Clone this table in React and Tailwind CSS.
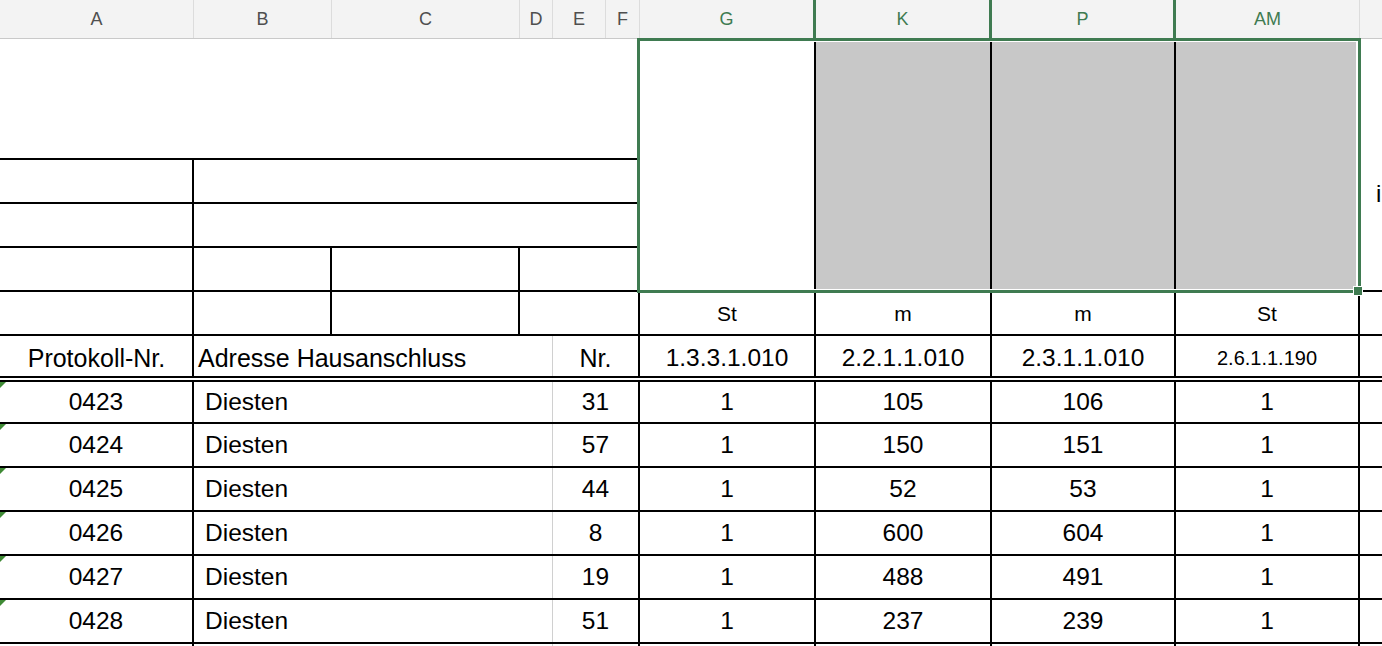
import React from "react";

const rows = [
  ["0423", "Diesten", "31", "1", "105", "106", "1"],
  ["0424", "Diesten", "57", "1", "150", "151", "1"],
  ["0425", "Diesten", "44", "1", "52", "53", "1"],
  ["0426", "Diesten", "8", "1", "600", "604", "1"],
  ["0427", "Diesten", "19", "1", "488", "491", "1"],
  ["0428", "Diesten", "51", "1", "237", "239", "1"],
  ["", "", "", "", "", "", ""],
];

function Header() {
  return (
    <div className="flex h-[39px] border-b border-[#c9c9c9] bg-[#f3f3f3] text-[18px] text-[#4f4f4f]">
      <div className="flex w-[194px] shrink-0 items-center justify-center border-r border-[#dcdcdc]">A</div>
      <div className="flex w-[138px] shrink-0 items-center justify-center border-r border-[#dcdcdc]">B</div>
      <div className="flex w-[188px] shrink-0 items-center justify-center border-r border-[#dcdcdc]">C</div>
      <div className="flex w-[33px] shrink-0 items-center justify-center border-r border-[#dcdcdc]">D</div>
      <div className="flex w-[53px] shrink-0 items-center justify-center border-r border-[#dcdcdc]">E</div>
      <div className="flex w-[34px] shrink-0 items-center justify-center border-r border-[#dcdcdc]">F</div>
      <div className="flex w-[176px] shrink-0 items-center justify-center border-r-[3px] border-[#3f7b51] text-[#3f7b51]">G</div>
      <div className="flex w-[176px] shrink-0 items-center justify-center border-r-[3px] border-[#3f7b51] text-[#3f7b51]">K</div>
      <div className="flex w-[184px] shrink-0 items-center justify-center border-r-[3px] border-[#3f7b51] text-[#3f7b51]">P</div>
      <div className="flex w-[184px] shrink-0 items-center justify-center border-r border-[#dcdcdc] text-[#3f7b51]">AM</div>
      <div className="flex-1" />
    </div>
  );
}

function TopSection() {
  return (
    <div className="flex h-[253px]">
      <div className="flex w-[640px] shrink-0 flex-col">
        <div className="h-[121px] border-b-2 border-black" />
        <div className="flex h-[44px] border-b-2 border-black">
          <div className="w-[194px] shrink-0 border-r-2 border-black" />
          <div className="flex-1" />
        </div>
        <div className="flex h-[44px] border-b-2 border-black">
          <div className="w-[194px] shrink-0 border-r-2 border-black" />
          <div className="flex-1" />
        </div>
        <div className="flex h-[44px] border-b-2 border-black">
          <div className="w-[194px] shrink-0 border-r-2 border-black" />
          <div className="w-[138px] shrink-0 border-r-2 border-black" />
          <div className="w-[188px] shrink-0 border-r-2 border-black" />
          <div className="flex-1" />
        </div>
      </div>
      <div className="flex w-[720px] shrink-0 py-[3px]">
        <div className="w-[176px] shrink-0 border-r-2 border-black bg-white" />
        <div className="w-[176px] shrink-0 border-r-2 border-black bg-[#c8c8c8]" />
        <div className="w-[184px] shrink-0 border-r-2 border-black bg-[#c8c8c8]" />
        <div className="w-[180px] shrink-0 bg-[#c8c8c8]" />
        <div className="w-[4px] shrink-0" />
      </div>
      <div className="flex-1 overflow-hidden whitespace-nowrap border-b-2 border-black pl-[16px] pt-[143px] text-[24px] leading-[24px]">
        in
      </div>
    </div>
  );
}

function UnitRow() {
  return (
    <div className="flex h-[44px] border-b-2 border-black text-[21px] leading-[21px]">
      <div className="w-[194px] shrink-0 border-r-2 border-black" />
      <div className="w-[138px] shrink-0 border-r-2 border-black" />
      <div className="w-[188px] shrink-0 border-r-2 border-black" />
      <div className="w-[120px] shrink-0 border-r-2 border-black" />
      <div className="flex w-[176px] shrink-0 items-center justify-center border-r-2 border-black">St</div>
      <div className="flex w-[176px] shrink-0 items-center justify-center border-r-2 border-black">m</div>
      <div className="flex w-[184px] shrink-0 items-center justify-center border-r-2 border-black">m</div>
      <div className="flex w-[184px] shrink-0 items-center justify-center border-r-2 border-black">St</div>
      <div className="flex-1" />
    </div>
  );
}

function TitleRow() {
  return (
    <div className="flex h-[46px] border-b-[6px] border-double border-black text-[24.5px] leading-[24px]">
      <div className="flex w-[194px] shrink-0 items-center justify-center border-r-2 border-black pl-[1px] pt-[3px] text-[25px]">Protokoll-Nr.</div>
      <div className="flex w-[359px] shrink-0 items-center border-r border-[#d0d0d0] pl-[4px] pt-[3px] text-[25px]">Adresse Hausanschluss</div>
      <div className="flex w-[87px] shrink-0 items-center justify-center border-r-2 border-black pt-[3px] text-[25px]">Nr.</div>
      <div className="flex w-[176px] shrink-0 items-center justify-center border-r-2 border-black pt-[3px]">1.3.3.1.010</div>
      <div className="flex w-[176px] shrink-0 items-center justify-center border-r-2 border-black pt-[3px]">2.2.1.1.010</div>
      <div className="flex w-[184px] shrink-0 items-center justify-center border-r-2 border-black pt-[3px]">2.3.1.1.010</div>
      <div className="flex w-[184px] shrink-0 items-center justify-center border-r-2 border-black pt-[3px] text-[20px]">2.6.1.1.190</div>
      <div className="flex-1" />
    </div>
  );
}

function DataRow({ r, first }) {
  return (
    <div
      className={
        first
          ? "flex h-[42px] shrink-0 border-b-2 border-black text-[24.5px] leading-[24px]"
          : "flex h-[44px] shrink-0 border-b-2 border-black text-[24.5px] leading-[24px]"
      }
    >
      <div className="relative flex w-[194px] shrink-0 items-center justify-center border-r-2 border-black">
        {r[0] && (
          <span className="absolute left-0 top-0 h-0 w-0 border-r-[6px] border-t-[6px] border-r-transparent border-t-[#3f8a35]" />
        )}
        {r[0]}
      </div>
      <div className="flex w-[359px] shrink-0 items-center border-r border-[#d0d0d0] pl-[11px]">{r[1]}</div>
      <div className="flex w-[87px] shrink-0 items-center justify-center border-r-2 border-black">{r[2]}</div>
      <div className="flex w-[176px] shrink-0 items-center justify-center border-r-2 border-black">{r[3]}</div>
      <div className="flex w-[176px] shrink-0 items-center justify-center border-r-2 border-black">{r[4]}</div>
      <div className="flex w-[184px] shrink-0 items-center justify-center border-r-2 border-black">{r[5]}</div>
      <div className="flex w-[184px] shrink-0 items-center justify-center border-r-2 border-black">{r[6]}</div>
      <div className="flex-1" />
    </div>
  );
}

export default function App() {
  return (
    <div className="relative h-[646px] w-[1382px] overflow-hidden bg-white font-['Liberation_Sans',Arial,sans-serif] text-black">
      <Header />
      <TopSection />
      <UnitRow />
      <TitleRow />
      {rows.map((r, i) => (
        <DataRow key={i} r={r} first={i === 0} />
      ))}
      <div className="pointer-events-none absolute left-[637px] top-[38px] h-[255px] w-[724px] border-[3px] border-[#3f7b51]" />
      <div className="pointer-events-none absolute left-[1353px] top-[286px] h-[10px] w-[10px] border border-white bg-[#3f7b51]" />
    </div>
  );
}
